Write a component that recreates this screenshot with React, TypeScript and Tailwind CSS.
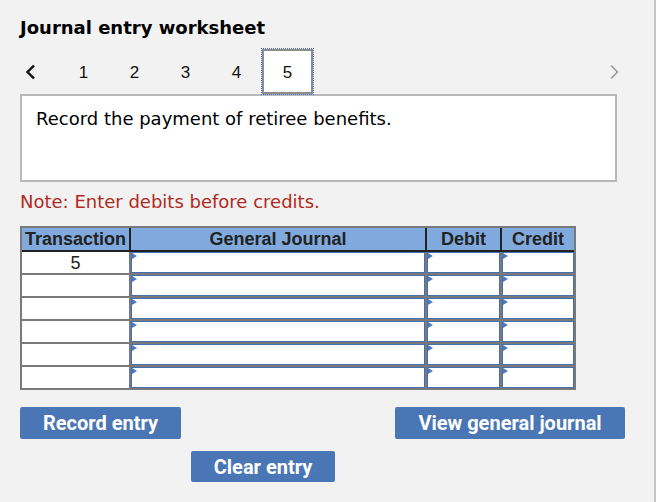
import React from 'react'

const ROWS = [0, 1, 2, 3, 4, 5]
const TABS = ['1', '2', '3', '4']

function InputCell({ w }: { w: string }) {
  return (
    <div className={`relative h-[21px] bg-white border border-[#4470b0] ${w}`}>
      <svg className="absolute left-0 top-0" width="5" height="6" viewBox="0 0 5 6">
        <path d="M0 0 L5 3 L0 6 Z" fill="#4a7bc4" />
      </svg>
    </div>
  )
}

export default function App() {
  return (
    <div className="flex h-[502px] w-[666px] bg-white">
      <div className="h-full w-[656px] shrink-0 border-r-2 border-[#c6c6c6] bg-[#f2f2f2] pl-[20px] pt-[15px]">
        {/* Title */}
        <h1 className="font-['DejaVu_Sans',Verdana,sans-serif] text-[18px] font-bold leading-[26px] text-black">
          Journal entry worksheet
        </h1>

        {/* Step tabs */}
        <div className="mt-[8px] flex h-[45px] w-[600px] items-center font-['Liberation_Sans',Arial,sans-serif] text-[17px] text-[#111]">
          <div className="flex w-[38px] items-center pl-[5px]">
            <svg width="11" height="16" viewBox="0 0 11 16">
              <path d="M9 1.5 L2.5 8 L9 14.5" fill="none" stroke="#111" strokeWidth="2.4" />
            </svg>
          </div>
          {TABS.map((t) => (
            <div key={t} className="flex h-full w-[51px] items-center justify-center pt-[2px]">
              {t}
            </div>
          ))}
          <div className="flex h-full w-[51px] items-center justify-center border-2 border-[#8c8c8c] bg-white pt-[2px] outline-1 outline-dotted outline-[#3f6fd0]">
            5
          </div>
          <div className="ml-auto flex items-center">
            <svg width="11" height="16" viewBox="0 0 11 16">
              <path d="M2 1.5 L8.5 8 L2 14.5" fill="none" stroke="#9a9a9a" strokeWidth="1.6" />
            </svg>
          </div>
        </div>

        {/* Question */}
        <div className="h-[88px] w-[597px] border-2 border-[#b9b9b9] bg-white pl-[14px] pt-[12px] font-['DejaVu_Sans',Verdana,sans-serif] text-[18px] leading-[22px] text-black">
          Record the payment of retiree benefits.
        </div>

        <p className="mt-[9px] font-['DejaVu_Sans',Verdana,sans-serif] text-[18px] leading-[22px] text-[#b02a22]">
          Note: Enter debits before credits.
        </p>

        {/* Journal table */}
        <div className="mt-[13px] w-[556px] border-2 border-[#7a7a7a] bg-[#7a7a7a] font-['Liberation_Sans',Arial,sans-serif] text-[18px] text-[#222]">
          <div className="flex h-[24px] border-b-2 border-[#222] bg-[#80aadd] font-bold leading-[22px]">
            <div className="w-[109px] border-r-2 border-[#222] text-center">Transaction</div>
            <div className="w-[296px] border-r-2 border-[#222] text-center">General Journal</div>
            <div className="w-[75px] border-r-2 border-[#222] text-center">Debit</div>
            <div className="w-[72px] text-center">Credit</div>
          </div>
          <div className="flex flex-col gap-[2px]">
            {ROWS.map((r) => (
              <div key={r} className="flex gap-[2px]">
                <div className="h-[21px] w-[107px] bg-white text-center leading-[22px]">{r === 0 ? '5' : ''}</div>
                <InputCell w="w-[294px]" />
                <InputCell w="w-[73px]" />
                <InputCell w="w-[72px]" />
              </div>
            ))}
          </div>
        </div>

        {/* Actions */}
        <div className="mt-[17px] flex w-[605px] justify-between font-['Roboto',Arial,sans-serif] text-[20px] font-bold text-white">
          <button className="h-[32px] w-[161px] rounded-[2px] bg-[#4a76b5]">Record entry</button>
          <button className="h-[32px] w-[230px] rounded-[2px] bg-[#4a76b5]">View general journal</button>
        </div>
        <div className="mt-[12px] pl-[171px] font-['Roboto',Arial,sans-serif] text-[20px] font-bold text-white">
          <button className="h-[31px] w-[144px] rounded-[2px] bg-[#4a76b5]">Clear entry</button>
        </div>
      </div>
    </div>
  )
}
